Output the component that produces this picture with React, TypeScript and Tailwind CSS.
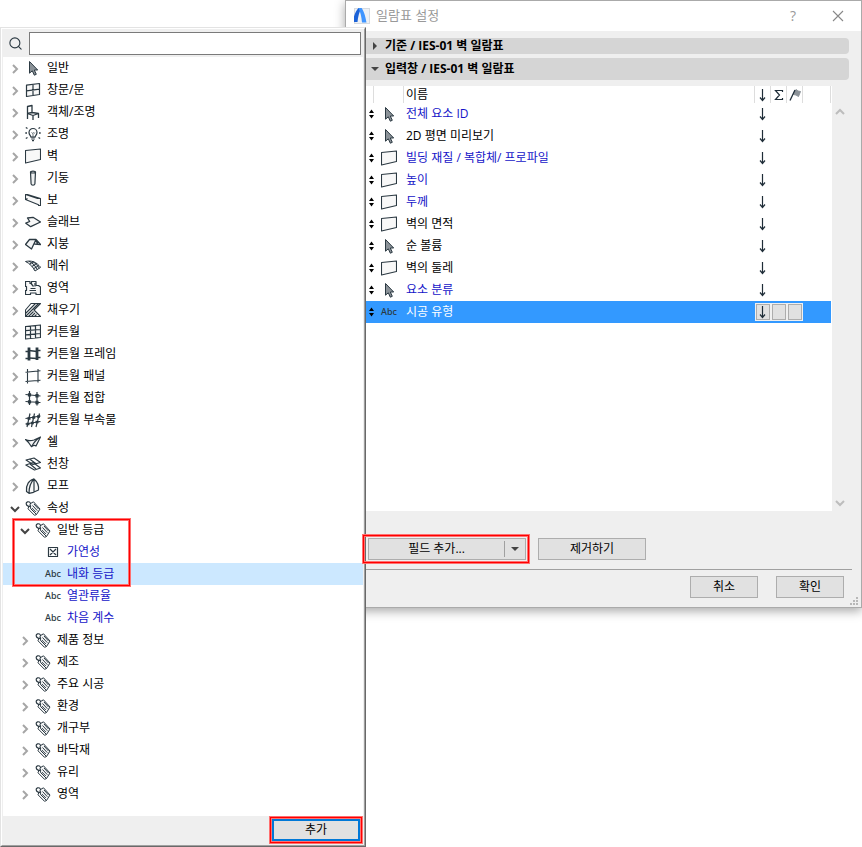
import { useState, type JSX, type ReactNode } from "react";
import { Search } from "lucide-react";

type IconName =
    | "arrow" | "window" | "chair" | "lamp" | "wall" | "column" | "beam" | "slab" | "roof" | "mesh" | "zone"
    | "fill" | "curtain" | "frame" | "panel" | "junction" | "accessory" | "shell" | "skylight" | "morph"
    | "tag" | "check" | "abc"

type TreeRow = {
    id: string
    label: string
    icon: IconName
    depth: 0 | 1 | 2
    parent?: string
    leaf?: boolean
    marked?: boolean
}

type Field = {
    label: string
    icon: IconName
    blue?: boolean
}

const treeRows: Array<TreeRow> = [
    { id: "general", label: "일반", icon: "arrow", depth: 0 },
    { id: "window", label: "창문/문", icon: "window", depth: 0 },
    { id: "object", label: "객체/조명", icon: "chair", depth: 0 },
    { id: "lamp", label: "조명", icon: "lamp", depth: 0 },
    { id: "wall", label: "벽", icon: "wall", depth: 0 },
    { id: "column", label: "기둥", icon: "column", depth: 0 },
    { id: "beam", label: "보", icon: "beam", depth: 0 },
    { id: "slab", label: "슬래브", icon: "slab", depth: 0 },
    { id: "roof", label: "지붕", icon: "roof", depth: 0 },
    { id: "mesh", label: "메쉬", icon: "mesh", depth: 0 },
    { id: "zone", label: "영역", icon: "zone", depth: 0 },
    { id: "fill", label: "채우기", icon: "fill", depth: 0 },
    { id: "cw", label: "커튼월", icon: "curtain", depth: 0 },
    { id: "cw-frame", label: "커튼월 프레임", icon: "frame", depth: 0 },
    { id: "cw-panel", label: "커튼월 패널", icon: "panel", depth: 0 },
    { id: "cw-junction", label: "커튼월 접합", icon: "junction", depth: 0 },
    { id: "cw-accessory", label: "커튼월 부속물", icon: "accessory", depth: 0 },
    { id: "shell", label: "쉘", icon: "shell", depth: 0 },
    { id: "skylight", label: "천창", icon: "skylight", depth: 0 },
    { id: "morph", label: "모프", icon: "morph", depth: 0 },
    { id: "props", label: "속성", icon: "tag", depth: 0 },
    { id: "ratings", label: "일반 등급", icon: "tag", depth: 1, parent: "props", marked: true },
    { id: "combustible", label: "가연성", icon: "check", depth: 2, parent: "ratings", leaf: true },
    { id: "fire", label: "내화 등급", icon: "abc", depth: 2, parent: "ratings", leaf: true },
    { id: "thermal", label: "열관류율", icon: "abc", depth: 2, parent: "ratings", leaf: true },
    { id: "sound", label: "차음 계수", icon: "abc", depth: 2, parent: "ratings", leaf: true },
    { id: "product", label: "제품 정보", icon: "tag", depth: 1, parent: "props" },
    { id: "manufacture", label: "제조", icon: "tag", depth: 1, parent: "props" },
    { id: "construction", label: "주요 시공", icon: "tag", depth: 1, parent: "props" },
    { id: "environment", label: "환경", icon: "tag", depth: 1, parent: "props" },
    { id: "opening", label: "개구부", icon: "tag", depth: 1, parent: "props" },
    { id: "floor", label: "바닥재", icon: "tag", depth: 1, parent: "props" },
    { id: "glass", label: "유리", icon: "tag", depth: 1, parent: "props" },
    { id: "area", label: "영역", icon: "tag", depth: 1, parent: "props" },
]

const fields: Array<Field> = [
    { label: "전체 요소 ID", icon: "arrow", blue: true },
    { label: "2D 평면 미리보기", icon: "arrow" },
    { label: "빌딩 재질 / 복합체/ 프로파일", icon: "wall", blue: true },
    { label: "높이", icon: "wall", blue: true },
    { label: "두께", icon: "wall", blue: true },
    { label: "벽의 면적", icon: "wall" },
    { label: "순 볼륨", icon: "arrow" },
    { label: "벽의 둘레", icon: "wall" },
    { label: "요소 분류", icon: "arrow", blue: true },
    { label: "시공 유형", icon: "abc" },
]

const shapes: Record<Exclude<IconName, "abc">, ReactNode> = {
    arrow: <path d="M4.5 1.5v11.7l2.8-2.4 2 4.4 2-.9-2-4.3h3.4z" fill="#8b9298" />,
    window: <path d="M1.5 3.2l13-1.700v11l-13 2zM8 2.4v11.2M1.5 8.9l13-1.8" fill="#f8f8f8" strokeWidth="1.2" />,
    chair: <path d="M2.5 15V2.5l4.5-1v7M2.500 9.500L7 8.500l6.500 1-5.500 2-5.500-2M13.500 9.500V14M8 11.500V16" strokeWidth="1.3" />,
    lamp: (
        <>
            <path d="M6 11.200c0-1.300-2-2.200-2-4.700a4 4 0 018 0c0 2.500-2 3.400-2 4.700zM6.200 13h3.600M7 14.700h2" strokeWidth="1.2" />
            <path d="M6.500 6.500l1 1 .8-1 .8 1 .8-1M8 8v3" strokeWidth=".7" />
            <path d="M.8 1.500l1.700 1M.3 7h1.700M.8 12.500l1.700-1M15.200 1.500l-1.700 1M15.700 7H14M15.200 12.500l-1.700-1" strokeWidth="1.3" />
        </>
    ),
    wall: <path d="M.5 2.500l15-1.500v10.500l-15 3.500z" fill="#f8f8f8" strokeWidth="1.1" />,
    column: <path d="M5.500 2l.6 12c.3 1.600 3.500 1.600 3.800 0l.6-12M5.500 2c0-1.300 5-1.300 5 0s-5 1.300-5 0z" fill="#eef0f1" strokeWidth="1.2" />,
    beam: <path d="M.5 2.500l12 4h3v7h-2v-.8L.5 7.500zM.5 2.500h2l13 4M.5 7.500l2-1" fill="#f8f8f8" strokeWidth="1.1" />,
    slab: <path d="M2.500 4l5.500-.7L15.500 8 5.700 12.700.8 9.200l3.900-1.700z" fill="#f8f8f8" strokeWidth="1.3" />,
    roof: <path d="M.5 8.500l4-5H11L6.500 13zM11 3.500l4.500 5-6-.5M11 3.500l1.500 4.700" fill="#f4f5f6" strokeWidth="1.3" />,
    mesh: (
        <>
            <path d="M.5 3.500c3-.6 5-.6 8 .2 3 1 5 3.300 7.200 5.600L10 13C8 9 5 5.500.5 3.500z" fill="#e4e7e9" />
            <path d="M4 3.200c4 1.800 6.500 5 8.200 8.300M7 3.300c3.500 1.700 5.500 4 7.300 7M4.500 6.200l4-2.500M6.800 8.500l5-3M8.500 10.800l5.300-3.300" />
        </>
    ),
    zone: (
        <>
            <path d="M.5 1.500h4.500v2h1.500v-2h4.500v4h2.500l2 1.500v7.500H11V13H5.500v1.500h-5v-4h1v-4h-1z" fill="#f8f8f8" strokeWidth="1.2" />
            <path d="M6 3.500l2.500 3M10 3v3.500M5.500 8.500h5M4.500 10.500h6.500" strokeWidth="1.2" />
        </>
    ),
    fill: <path d="M6 1.500h9.500L9 8l6.500 6.500H.5V8zM.5 14.500l13-13M.5 11.500l10-10M3.500 14.500L8.500 9.500M6.500 14.500l3.500-3.500M9.500 14.500l2-2" strokeWidth="1.1" />,
    curtain: <path d="M.5 2.500l15-1.500v12.500l-15 1.500zM5.500 2v12.500M10.500 1.500V14M.5 6.700l15-1.200M.5 10.800l15-1.300" fill="#f8f8f8" strokeWidth="1.2" />,
    frame: (
        <>
            <path d="M4 1.500v13M12 1.500V14" strokeWidth="2.8" />
            <path d="M.5 5.500h3M4 4.500l8 1M12 4.500h3.500M.5 12.500h3M4 12l8 .5M12 11.500h3.500" strokeWidth="1.5" />
        </>
    ),
    panel: <path d="M2.500 1v14.500M13 1v13.500M.5 4.200l15-1.500M.5 13.500l15-1.200" strokeWidth="1.1" />,
    junction: (
        <>
            <path d="M4.500 1v14M12 2v13.500M.5 4.500l15 1.500M.5 11.500l15 1" strokeWidth="1.2" />
            <path d="M4.500 3.200v3.400M12 4v3.400M4.500 10.200v3.400M12 10.800v3.400" strokeWidth="3.2" />
        </>
    ),
    accessory: (
        <>
            <path d="M5 1.500L2 15M9.500 1.500L6.500 15M14.500 1.500L11 15M.5 6.500L15.500 4M.5 12l15-2.500" strokeWidth="1.2" />
            <path d="M2.500 6.500h3M7.200 5.500h3M12 4.500h3M1.500 12h3M5.800 11h3M10.500 10h3" strokeWidth="2.6" />
        </>
    ),
    shell: <path d="M.5 5.500c2.500 1.500 5.500 1.500 8.500.5l6.500-3L11 12c-1.500-1-3-.5-4.500.7C5 10 3 7.500.5 5.500zM6.500 12.700C9 8 12 5 15.500 3" fill="#f4f5f6" strokeWidth="1.2" />,
    skylight: <path d="M1 4l8-2 6.500 4.500-7.500 2zM.8 9L8 6.500l7.500 5.500-6 2zM4.500 3l7 5M5 8l6 5" strokeWidth="1.1" />,
    morph: <path d="M9 1C4 2 .8 7 1.500 13.500L4 15.300l4.500-1 5-2.300C14 8 12.500 4 9 1zM9 1C5.500 4.500 4 10 4 15.300M9 1v13" fill="#f8f8f8" strokeWidth="1.2" />,
    tag: (
        <>
            <path d="M5 3.800l3.500-2L15 9l-3.500 5.500-6-6z" fill="#f4f5f6" />
            <path d="M4 6l-1 2.800 6.500 6.500 2-.8M7.500 5.500l4.800 5.200M9 4l4.500 5M6.800 8l4 4" />
            <path d="M6 5.800C4.500 7 1.500 6 1.200 3.800 1 2 3.500.8 5.500 2.800" strokeWidth="1.2" />
        </>
    ),
    check: <path d="M3.500 3.500h9v9h-9zM5 5l6 6M11 5l-6 6" strokeWidth="1.2" />,
}

function ItemIcon({ name }: { name: IconName }): JSX.Element {
    if (name === "abc") {
        return <span className="block w-4 font-['Noto_Sans'] text-[9px] leading-4 font-medium text-[#2b3942]">Abc</span>
    }
    return (
        <svg viewBox="0 0 16 16" className="size-4 shrink-0" fill="none" stroke="#2b3942" strokeLinejoin="round" aria-hidden="true">
            {shapes[name]}
        </svg>
    )
}

function Chevron({ dir, className }: { dir: "right" | "down" | "up", className?: string }): JSX.Element {
    const d = { right: "M3 1l4 4-4 4", down: "M1 3l4 4 4-4", up: "M1 7l4-4 4 4" }
    return (
        <svg viewBox="0 0 10 10" className={`size-2.5 ${className ?? ""}`} fill="none" stroke="currentColor" strokeWidth="2" aria-hidden="true">
            <path d={d[dir]} />
        </svg>
    )
}

function DownArrow({ className }: { className: string }): JSX.Element {
    return (
        <svg viewBox="0 0 8 14" className={`h-3.5 w-2 ${className}`} fill="none" stroke="#1f2d38" strokeWidth="1.2" aria-hidden="true">
            <path d="M3.5 1v11.500M1 9.500l2.500 3 2.500-3" />
        </svg>
    )
}

// red frame drawn around the parts the user has to click
function Highlight({ className }: { className: string }): JSX.Element {
    return (
        <span
            aria-hidden="true"
            className={`pointer-events-none absolute z-20 border border-[#ff0000] shadow-[0_0_0_1px_#ff7070,inset_0_0_0_1px_#ff7070] ${className}`}
        />
    )
}

const indent = ["pl-[7px]", "pl-[17px]", "pl-[27px]"]

function FieldPicker(): JSX.Element {
    const [open, setOpen] = useState<Array<string>>(["props", "ratings"])
    const [selected, setSelected] = useState("fire")

    const isVisible = (row: TreeRow): boolean => {
        if (!row.parent) return true
        const parent = treeRows.find((r) => r.id === row.parent)
        return open.includes(row.parent) && (!parent || isVisible(parent))
    }

    const handleClick = (row: TreeRow): void => {
        if (row.leaf) {
            setSelected(row.id)
            return
        }
        setOpen((prev) => prev.includes(row.id) ? prev.filter((id) => id !== row.id) : [...prev, row.id])
    }

    return (
        <section className="relative z-10 mt-[27px] w-[366px] shrink-0 border border-t-[#e3e3e3] border-r-[#696969] border-b-[#696969] border-l-[#e3e3e3]">
            <div className="border border-t-white border-r-[#a0a0a0] border-b-[#a0a0a0] border-l-white bg-[#efefef] px-px">
                {/* Search */}
                <div className="flex h-7 items-center gap-1.5 pr-0.5 pl-[5px]">
                    <label htmlFor="search" aria-label="검색">
                        <Search size={15} strokeWidth={1.8} className="text-[#2b3942]" />
                    </label>
                    <input id="search" type="text" className="h-[23px] min-w-0 flex-1 border border-[#7a7a7a] bg-white px-1" />
                </div>

                {/* Tree */}
                <ul className="bg-white pb-[11px]">
                    {treeRows.filter(isVisible).map((row) => (
                        <li key={row.id} className="relative">
                            <button
                                type="button"
                                onClick={() => handleClick(row)}
                                className={`flex h-[22px] w-full items-center text-left ${indent[row.depth]} ${row.id === selected ? "bg-[#cce8ff]" : ""}`}
                            >
                                <span className="w-[15px] pt-0.5">
                                    {!row.leaf && (open.includes(row.id)
                                        ? <Chevron dir="down" className="text-[#444444]" />
                                        : <Chevron dir="right" className="text-[#a6a6a6]" />)}
                                </span>
                                <ItemIcon name={row.icon} />
                                <span className={`pl-1.5 ${row.leaf ? "text-[#1414c8]" : ""}`}>{row.label}</span>
                            </button>
                            {row.marked && <Highlight className="top-0 left-2.5 h-[67px] w-[117px]" />}
                        </li>
                    ))}
                </ul>

                <div className="flex h-[29px] items-start justify-end pt-[3px] pr-[3px]">
                    <div className="relative">
                        <button type="button" className="h-[22px] w-22 border-2 border-[#0078d7] bg-[#e1e1e1] leading-4">추가</button>
                        <Highlight className="-inset-0.5" />
                    </div>
                </div>
            </div>
        </section>
    )
}

function PanelHeader({ label, expanded }: { label: string, expanded?: boolean }): JSX.Element {
    return (
        <button
            type="button"
            className={`flex w-full items-center gap-1.5 rounded-r-sm bg-[#d5d5d5] pl-[5px] text-left font-bold ${expanded ? "h-[22px]" : "h-4"}`}
        >
            <svg viewBox="0 0 8 8" className="size-2" fill="#444444" aria-hidden="true">
                <path d={expanded ? "M0 2h8L4 6z" : "M2 0l4 4-4 4z"} />
            </svg>
            <span>{label}</span>
        </button>
    )
}

const toggleClass = "mx-px block h-4 w-3.5 border border-[#adadad] bg-[#e1e1e1] outline outline-[#f0f0f0]"

function FieldTable(): JSX.Element {
    const [selected, setSelected] = useState(fields.length - 1)

    return (
        <div className="mr-3.5 flex h-[425px]">
            <div className="min-w-0 flex-1 bg-white pr-px">
                <table className="w-full table-fixed border-separate border-spacing-0">
                    <thead>
                        <tr className="h-[17px] text-left *:border-r *:border-[#dddddd] *:p-0 *:font-normal">
                            <th className="w-2" />
                            <th className="w-[30px]" />
                            <th className="leading-4"><span className="pl-0.5">이름</span></th>
                            <th className="w-4"><DownArrow className="ml-1" /></th>
                            <th className="w-4">
                                <svg viewBox="0 0 10 14" className="ml-[3px] h-3.5 w-2.5" fill="none" stroke="#1f2d38" strokeWidth="1.2" aria-label="합계">
                                    <path d="M8.5 4V2.500H1.500L5.500 7l-4 4.500h7V10" />
                                </svg>
                            </th>
                            <th className="w-4">
                                <svg viewBox="0 0 14 14" className="h-3.5 w-3.5" fill="none" stroke="#1f2d38" aria-label="플래그">
                                    <path d="M7.500 3.500l1.500-2 2 1.500 2.500.5-2 5-2.500-1.500-2.500-.5z" fill="#8b9298" stroke="#8b9298" />
                                    <path d="M3 12.500L8 2" strokeWidth="1.3" />
                                </svg>
                            </th>
                            <th className="w-7" />
                        </tr>
                    </thead>
                    <tbody>
                        {fields.map((field, i) => {
                            const active = i === selected
                            const color = active ? "text-white" : field.blue ? "text-[#1414c8]" : "text-black"
                            return (
                                <tr key={field.label} onClick={() => setSelected(i)} className={`h-[22px] *:p-0 ${active ? "bg-[#3399ff]" : ""}`}>
                                    <td>
                                        <svg viewBox="0 0 5 10" className="ml-[3px] h-2.5 w-[5px]" aria-hidden="true">
                                            <path d="M2.500 .5L5 4H0zM2.500 9.500L0 6h5z" />
                                        </svg>
                                    </td>
                                    <td><div className="pl-[7px]"><ItemIcon name={field.icon} /></div></td>
                                    <td className={`truncate ${color}`}><div className="pl-0.5">{field.label}</div></td>
                                    <td>{active
                                        ? <button type="button" aria-label="정렬" className={toggleClass}><DownArrow className="ml-0.5" /></button>
                                        : <DownArrow className="ml-1" />}
                                    </td>
                                    <td>{active && <button type="button" aria-label="합계" className={toggleClass} />}</td>
                                    <td>{active && <button type="button" aria-label="플래그" className={toggleClass} />}</td>
                                    <td />
                                </tr>
                            )
                        })}
                    </tbody>
                </table>
            </div>

            {/* Scroll arrows */}
            <div className="flex w-[15px] flex-col items-center justify-between pt-[21px] pb-[3px] text-[#bdbdbd]">
                <button type="button" aria-label="위로"><Chevron dir="up" /></button>
                <button type="button" aria-label="아래로"><Chevron dir="down" /></button>
            </div>
        </div>
    )
}

const buttonClass = "h-[22px] border border-[#adadad] bg-[#e1e1e1] pb-px leading-4"

function SchemeDialog(): JSX.Element {
    return (
        <section className="-ml-[21px] min-w-0 flex-1 border border-[#aaaaaa] bg-[#efefef] shadow-[0_3px_10px_rgba(0,0,0,0.35)]">
            {/* Title bar */}
            <header className="flex h-[30px] items-center bg-white pr-[17px] pl-2 text-[#999999]">
                <svg viewBox="0 0 16 16" className="size-4" aria-hidden="true">
                    <rect x=".5" y=".5" width="15" height="15" fill="#eef1f5" stroke="#d5dae0" />
                    <path d="M0 14V8.500C1 5 2.500 2 4.500 0H7.500C5 4 4 9 3.500 14z" fill="#1b62d8" />
                    <path d="M4.500 0h3c2.500 3 4 9 5 14.500H8C7.500 9 6.500 4 4.500 0z" fill="#3f95ff" />
                </svg>
                <h1 className="flex-1 pl-1.5 text-[13px]">일람표 설정</h1>
                <button type="button" className="mr-9 text-sm leading-4 font-medium" aria-label="도움말">?</button>
                <button type="button" aria-label="닫기">
                    <svg viewBox="0 0 12 12" className="size-3" stroke="#888888" strokeWidth="1.1" aria-hidden="true">
                        <path d="M1 1l10 10M11 1L1 11" />
                    </svg>
                </button>
            </header>

            <div className="pl-5">
                <div className="mr-3 flex flex-col gap-1 pt-[7px] pb-1.5">
                    <PanelHeader label="기준 / IES-01 벽 일람표" />
                    <PanelHeader label="입력창 / IES-01 벽 일람표" expanded />
                </div>

                <FieldTable />

                <div className="flex gap-3 pt-[27px] pb-[9px] pl-0.5">
                    <div className="relative flex">
                        <button type="button" className={`w-[136px] border-r-0 ${buttonClass}`}>필드 추가...</button>
                        <button type="button" aria-label="필드 목록" className="flex h-[22px] w-[22px] items-center border border-l-0 border-[#adadad] bg-[#e1e1e1]">
                            <span className="h-4 border-l border-[#a0a0a0]" />
                            <svg viewBox="0 0 8 8" className="ml-1.5 size-2" fill="#444444" aria-hidden="true">
                                <path d="M0 2h8L4 6z" />
                            </svg>
                        </button>
                        <Highlight className="-inset-y-[3px] -right-[3px] -left-[5px]" />
                    </div>
                    <button type="button" className={`w-27 ${buttonClass}`}>제거하기</button>
                </div>

                <div className="mr-[9px] border-t border-[#a0a0a0]" />

                <div className="relative flex h-[37px] items-start justify-end gap-[18px] pt-1.5 pr-[17px]">
                    <button type="button" className={`w-17 ${buttonClass}`}>취소</button>
                    <button type="button" className={`w-17 ${buttonClass}`}>확인</button>
                    <svg viewBox="0 0 8 8" className="absolute right-[3px] bottom-0.5 size-2" fill="#b8b8b8" aria-hidden="true">
                        <path d="M6 0h2v2H6zM3 3h2v2H3zM6 3h2v2H6zM0 6h2v2H0zM3 6h2v2H3zM6 6h2v2H6z" />
                    </svg>
                </div>
            </div>
        </section>
    )
}

export default function App(): JSX.Element {
    return (
        <main className="flex min-h-screen items-start bg-white font-['Open_Sans','Noto_Sans_CJK_KR',sans-serif] text-xs text-black">
            <FieldPicker />
            <SchemeDialog />
        </main>
    )
}
